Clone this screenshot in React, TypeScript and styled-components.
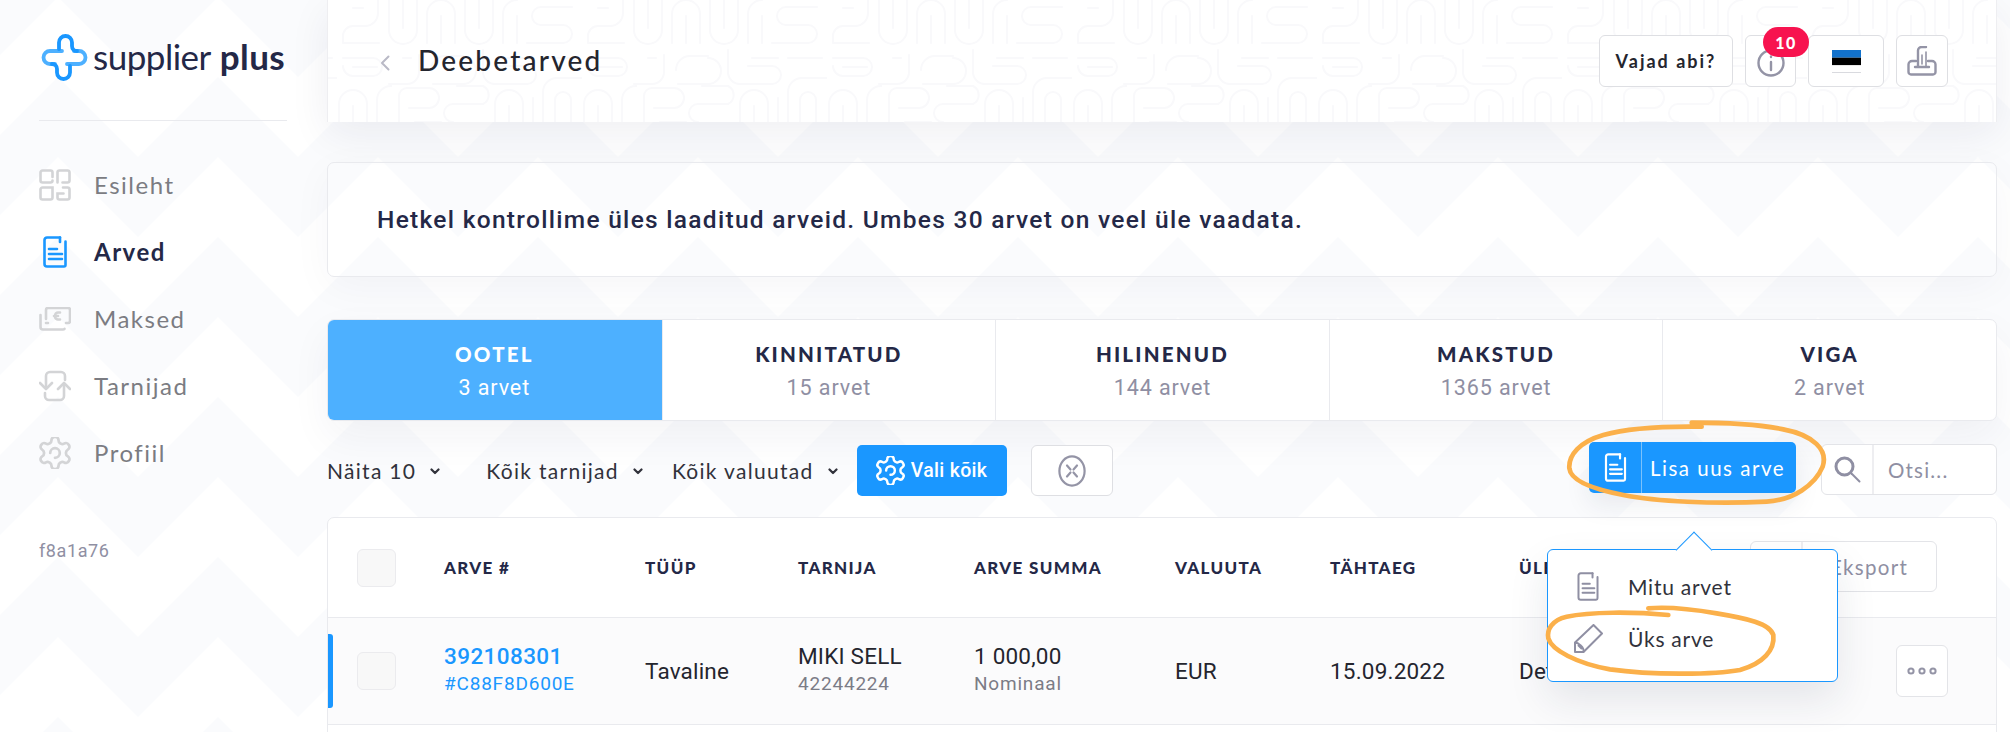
import React from "react";
import styled, { createGlobalStyle } from "styled-components";

const chevronSvg = `<svg xmlns='http://www.w3.org/2000/svg' width='160' height='160'><polygon fill='#fafbfd' points='0,80 80,0 160,80 160,160 80,80 0,160'/></svg>`;
const mazeSvg = `<svg xmlns='http://www.w3.org/2000/svg' width='245' height='122' fill='none' stroke='#f9f9fb' stroke-width='2' stroke-linecap='round'>
<path d='M6 42V36a10 10 0 0 1 10-10H28a13 13 0 0 0 13-13V0M6 43H42M16 8H26'/>
<path d='M52 0V30a14 14 0 0 0 28 0V0M66 0V28'/>
<path d='M90 43V14a14 14 0 0 1 28 0V43M104 16V43'/>
<path d='M128 0V30a14 14 0 0 0 28 0V0M142 0V28'/>
<path d='M166 43V14a14 14 0 0 1 14-14M180 16V43'/>
<path d='M190 43H226a9 9 0 0 0 0-18H204a9 9 0 0 1 0-18H235'/>
<path d='M6 58H36a9 9 0 0 1 0 18H16a10 10 0 0 1-10-10M16 67H40'/>
<path d='M52 84H70a12 12 0 0 0 12-12V55M66 58H74'/>
<path d='M94 70a14 14 0 0 1 14-14H126M96 84H126a12 12 0 0 0 0-26'/>
<path d='M146 50V72a12 12 0 0 0 12 12H190a9 9 0 0 0 0-18H166M170 58H196'/>
<path d='M206 122V92a14 14 0 0 1 14-14H245M206 58H240'/>
<path d='M2 122V104a14 14 0 0 1 28 0V122M16 106V122'/>
<path d='M40 122V100a14 14 0 0 1 14-14V84M62 122V96a8 8 0 0 1 8-8H92a10 10 0 0 1 0 20H72M78 122H104'/>
<path d='M116 122a9 9 0 0 1 0-18H146a10 10 0 0 0 0-18H120'/>
<path d='M158 122V104a14 14 0 0 1 28 0V122M172 106V122'/>
<path d='M196 122V98M218 122V100a8 8 0 0 1 16 0V122'/>
</svg>`;
const uri = (s: string) => `url("data:image/svg+xml,${encodeURIComponent(s.replace(/\n/g, ""))}")`;

const Global = createGlobalStyle`
  html, body { margin: 0; padding: 0; background: #fff; }
  * { box-sizing: border-box; }
`;

const Page = styled.div`
  position: relative;
  width: 2010px;
  height: 732px;
  overflow: hidden;
  display: flex;
  background-color: #fff;
  background-image: ${uri(chevronSvg)};
  background-position: -22px 77px;
  color: #242847;
  font-family: Lato, "Liberation Sans", sans-serif;
`;

const Sidebar = styled.aside`
  flex: none;
  width: 327px;
  padding-left: 39px;
`;

const LogoRow = styled.div`
  width: 248px;
  height: 121px;
  padding: 34px 0 0 2px;
  border-bottom: 1px solid #e9eaee;
  display: flex;
  align-items: flex-start;
  gap: 5px;
`;

const LogoText = styled.div`
  font-size: 35px;
  line-height: 44px;
  letter-spacing: -0.5px;
  color: #242847;
  white-space: nowrap;
  b { font-weight: 700; margin-left: 9px; letter-spacing: 0.4px; }
`;

const Nav = styled.nav`
  padding-top: 30px;
`;

const NavItem = styled.div<{ $active?: boolean }>`
  height: 67px;
  display: flex;
  align-items: center;
  gap: 23px;
  font-size: 24px;
  letter-spacing: 1.5px;
  font-weight: ${(p) => (p.$active ? 700 : 400)};
  color: ${(p) => (p.$active ? "#242847" : "#7b7c82")};
  svg { flex: none; }
`;

const NavDocSlot = styled.span`
  width: 32px;
  display: flex;
  justify-content: center;
`;

const Version = styled.div`
  margin-top: 52px;
  font-family: Roboto, sans-serif;
  font-size: 18px;
  line-height: 25px;
  letter-spacing: 0.6px;
  color: #8f8fa3;
`;

const Main = styled.main`
  flex: none;
  width: 1670px;
`;

const Header = styled.header`
  height: 122px;
  display: flex;
  align-items: center;
  padding: 0 48px 0 52px;
  background-color: #fff;
  background-image: ${uri(mazeSvg)};
  background-position: 9px 0;
  border-left: 1px solid #eeeef1;
  border-right: 1px solid #eeeef1;
  box-shadow: 0 12px 40px rgba(30, 35, 70, 0.07);
`;

const BackIcon = styled.svg`
  margin: 3px 28px 0 0;
`;

const Title = styled.h1`
  margin: 0 0 2px;
  flex: 1;
  font-size: 28px;
  font-weight: 500;
  letter-spacing: 2.2px;
  color: #24252e;
`;

const HeadBtn = styled.div<{ $w: number }>`
  position: relative;
  flex: none;
  width: ${(p) => p.$w}px;
  height: 52px;
  margin-left: 12px;
  display: flex;
  align-items: center;
  justify-content: center;
  background: #fff;
  border: 1px solid #dedfe3;
  border-radius: 6px;
  font-size: 18px;
  font-weight: 700;
  letter-spacing: 2px;
  color: #24252e;
`;

const Badge = styled.span`
  position: absolute;
  left: 17px;
  top: -9px;
  width: 46px;
  height: 30px;
  border-radius: 15px;
  background: #f7134f;
  color: #fff;
  font-size: 16px;
  font-weight: 900;
  letter-spacing: 1.5px;
  display: flex;
  align-items: center;
  justify-content: center;
  z-index: 1;
`;

const Alert = styled.section`
  margin-top: 40px;
  height: 115px;
  display: flex;
  align-items: center;
  padding-left: 49px;
  border: 1px solid #e9eaee;
  border-radius: 7px;
  box-shadow: 0 10px 40px rgba(30, 35, 70, 0.04);
  font-family: Roboto, sans-serif;
  font-size: 24.5px;
  font-weight: 500;
  letter-spacing: 1.29px;
  color: #242847;
`;

const Tabs = styled.section`
  margin-top: 42px;
  height: 102px;
  display: grid;
  grid-template-columns: repeat(5, 1fr);
  background: #fff;
  border: 1px solid #e9eaee;
  border-radius: 7px;
  box-shadow: 0 16px 40px rgba(30, 35, 70, 0.05);
  overflow: hidden;
`;

const Tab = styled.div<{ $active?: boolean }>`
  display: flex;
  flex-direction: column;
  align-items: center;
  padding-top: ${(p) => (p.$active ? 21 : 20)}px;
  margin: ${(p) => (p.$active ? "-1px 0 -1px -1px" : "0")};
  background: ${(p) => (p.$active ? "#4db0ff" : "transparent")};
  & + & { border-left: 1px solid #e9eaee; }
  strong {
    font-size: 20.5px;
    line-height: 28px;
    font-weight: 900;
    letter-spacing: 2.2px;
    color: ${(p) => (p.$active ? "#fff" : "#242847")};
  }
  span {
    margin-top: 6px;
    font-family: Roboto, sans-serif;
    font-size: 21.5px;
    line-height: 28px;
    letter-spacing: 0.9px;
    color: ${(p) => (p.$active ? "#fff" : "#8f8fa3")};
  }
`;

const Toolbar = styled.section`
  margin-top: 24px;
  height: 51px;
  display: flex;
  align-items: center;
`;

const Filter = styled.div<{ $gap: number }>`
  display: flex;
  align-items: center;
  margin-right: ${(p) => p.$gap}px;
  font-size: 21px;
  letter-spacing: 1.3px;
  color: #31323b;
  svg { margin-left: 14px; margin-top: 2px; }
`;

const BlueBtn = styled.div`
  width: 150px;
  height: 51px;
  display: flex;
  align-items: center;
  justify-content: center;
  gap: 6px;
  background: #1a97ff;
  border-radius: 5px;
  color: #fff;
  font-family: Roboto, sans-serif;
  font-size: 19.5px;
  font-weight: 500;
  letter-spacing: 0.3px;
`;

const GhostBtn = styled.div`
  width: 82px;
  height: 51px;
  margin-left: 24px;
  display: flex;
  align-items: center;
  justify-content: center;
  background: #fff;
  border: 1px solid #dedfe3;
  border-radius: 6px;
`;

const AddWrap = styled.div`
  position: relative;
  margin-left: auto;
  margin-top: -6px;
`;

const AddBtn = styled.div`
  width: 207px;
  height: 51px;
  display: flex;
  align-items: center;
  background: #1a97ff;
  border-radius: 5px;
  box-shadow: 0 12px 26px rgba(30, 35, 70, 0.08);
  color: #fff;
  font-size: 20.5px;
  letter-spacing: 1.5px;
  span { margin-left: 8px; }
`;

const AddIcon = styled.div`
  width: 53px;
  height: 51px;
  display: flex;
  align-items: center;
  justify-content: center;
  border-right: 1px solid #7cc2fb;
`;

const Search = styled.div`
  width: 176px;
  height: 51px;
  margin-left: 25px;
  margin-top: -2px;
  display: flex;
  align-items: center;
  background: #fff;
  border: 1px solid #e3e4e8;
  border-radius: 6px;
  color: #8f8fa3;
  font-size: 20.5px;
  letter-spacing: 1.2px;
  span { margin-left: 14px; }
`;

const SearchIcon = styled.div`
  width: 52px;
  height: 49px;
  display: flex;
  align-items: center;
  justify-content: center;
  border-right: 2px solid #eeeef1;
`;

const Menu = styled.div`
  position: absolute;
  left: -42px;
  top: 107px;
  width: 291px;
  height: 133px;
  padding-top: 10px;
  background: #fff;
  border: 1px solid #1a97ff;
  border-radius: 6px;
  box-shadow: 0 18px 40px rgba(30, 35, 70, 0.1);
  z-index: 3;
  &::before {
    content: "";
    position: absolute;
    left: 133px;
    top: -13px;
    width: 25px;
    height: 25px;
    background: #fff;
    border-left: 1px solid #1a97ff;
    border-top: 1px solid #1a97ff;
    transform: rotate(45deg);
  }
`;

const MenuItem = styled.div`
  position: relative;
  height: 52px;
  display: flex;
  align-items: center;
  font-size: 21px;
  letter-spacing: 0.75px;
  color: #31323b;
`;

const MenuIcon = styled.div`
  width: 80px;
  display: flex;
  justify-content: center;
`;

const Table = styled.section`
  margin-top: 21px;
  height: 240px;
  background: #fff;
  border: 1px solid #e9eaee;
  border-radius: 7px;
`;

const Row = styled.div<{ $h: number; $tint?: boolean }>`
  position: relative;
  height: ${(p) => p.$h}px;
  display: grid;
  grid-template-columns: 87px 201px 153px 176px 201px 155px 189px 1fr;
  align-items: center;
  padding-left: 29px;
  background: ${(p) => (p.$tint ? "#fbfbfc" : "transparent")};
  border-bottom: 1px solid #e9eaee;
`;

const Check = styled.div`
  width: 39px;
  height: 38px;
  background: #f8f8f8;
  border: 1px solid #ebebee;
  border-radius: 6px;
`;

const Th = styled.div`
  margin-bottom: 1px;
  font-size: 17px;
  font-weight: 900;
  letter-spacing: 1.35px;
  color: #242847;
  white-space: nowrap;
`;

const Marker = styled.div`
  position: absolute;
  left: 0;
  top: 16px;
  width: 5px;
  height: 74px;
  background: #1a97ff;
  border-radius: 0 3px 3px 0;
`;

const Cell = styled.div`
  font-family: Roboto, sans-serif;
  font-size: 22.5px;
  letter-spacing: 0.2px;
  color: #24252e;
  white-space: nowrap;
`;

const Stack = styled.div`
  margin-top: -2px;
  display: flex;
  flex-direction: column;
  font-family: Roboto, sans-serif;
  white-space: nowrap;
`;

const Primary = styled.span<{ $link?: boolean }>`
  font-size: 22.5px;
  line-height: 28px;
  font-weight: ${(p) => (p.$link ? 500 : 400)};
  letter-spacing: ${(p) => (p.$link ? 0.4 : 0.2)}px;
  color: ${(p) => (p.$link ? "#1a97ff" : "#24252e")};
`;

const Secondary = styled.span<{ $link?: boolean }>`
  font-size: 19px;
  line-height: 28px;
  letter-spacing: 0.8px;
  color: ${(p) => (p.$link ? "#1a97ff" : "#7b7c86")};
`;

const Export = styled.div`
  position: absolute;
  left: 1422px;
  top: 23px;
  width: 187px;
  height: 51px;
  display: flex;
  align-items: center;
  background: #fff;
  border: 1px solid #e3e4e8;
  border-radius: 6px;
  color: #8f8fa3;
  font-size: 20.5px;
  letter-spacing: 1.3px;
  span { margin-left: 27px; }
`;

const ExportIcon = styled.div`
  width: 52px;
  height: 49px;
  border-right: 2px solid #eeeef1;
`;

const MoreBtn = styled.div`
  position: absolute;
  left: 1568px;
  top: 27px;
  width: 52px;
  height: 52px;
  display: flex;
  align-items: center;
  justify-content: center;
  background: #fff;
  border: 1px solid #e3e4e8;
  border-radius: 6px;
`;

const Scribbles = styled.svg`
  position: absolute;
  left: 1500px;
  top: 400px;
  z-index: 5;
  pointer-events: none;
`;

const G = "#d3d4d6";

const Logo = () => (
  <svg width="47" height="47" viewBox="0 0 47 47" fill="none" strokeWidth="3.8" strokeLinecap="round">
    <path stroke="#4db0ff" d="M21 17H9a6.500 6.500 0 0 0 0 13h5M26 30h12a6.500 6.500 0 0 0 0-13h-5" />
    <path stroke="#1a97ff" d="M18 15V8.500a6.500 6.500 0 0 1 13 0V12c0 3 2 5 5 5M29 32v6.500a6.500 6.500 0 0 1-13 0V35c0-3-2-5-5-5" />
  </svg>
);

const HomeIcon = () => (
  <svg width="32" height="32" viewBox="0 0 32 32" fill="none" stroke={G} strokeWidth="2.6" strokeLinecap="round">
    <path d="M13.500 8V3.500a2 2 0 0 0-2-2H3.500a2 2 0 0 0-2 2v8a2 2 0 0 0 2 2h8a2 2 0 0 0 2-2" />
    <path d="M18.500 13.500V3.500a2 2 0 0 1 2-2h8a2 2 0 0 1 2 2v8a2 2 0 0 1-2 2h-5" />
    <path d="M13.500 24v4.500a2 2 0 0 1-2 2h-8a2 2 0 0 1-2-2v-8a2 2 0 0 1 2-2h10v6" />
    <path d="M24 18.500h4.500a2 2 0 0 1 2 2v8a2 2 0 0 1-2 2h-8a2 2 0 0 1-2-2v-4h6" />
  </svg>
);

const DocIcon = ({ c, w = 24, h = 32, sw = 2.6 }: { c: string; w?: number; h?: number; sw?: number }) => (
  <svg width={w} height={h} viewBox="0 0 24 32" fill="none" stroke={c} strokeWidth={sw} strokeLinecap="round" strokeLinejoin="round">
    <path d="M17 1.500H4a2.500 2.500 0 0 0-2.500 2.500v24A2.500 2.500 0 0 0 4 30.500h17a1.500 1.500 0 0 0 1.500-1.500V5.500" />
    <path d="M6 13h8M6 18h13M6 23h13" />
    <path d="M17 1.500V6" />
  </svg>
);

const MoneyIcon = () => (
  <svg width="32" height="24" viewBox="0 0 32 24" fill="none" stroke={G} strokeWidth="2.6" strokeLinecap="round" strokeLinejoin="round">
    <path d="M7 12V3a2 2 0 0 1 2-2h20a2 2 0 0 1 2 2v11a2 2 0 0 1-2 2h-2M7 16h2" />
    <path d="M1.500 8v12a2.500 2.500 0 0 0 2.500 2.500h20a2 2 0 0 0 1.500-.7" />
    <path d="M21 5.500h-2a3 3 0 0 0-3 3v1a3 3 0 0 0 3 3h2M15 9h4" />
  </svg>
);

const SwapIcon = () => (
  <svg width="32" height="32" viewBox="0 0 32 32" fill="none" stroke={G} strokeWidth="2.6" strokeLinecap="round" strokeLinejoin="round">
    <path d="M7 18V6a4 4 0 0 1 4-4h11a4 4 0 0 1 4 4v4" />
    <path d="M1 13l6 6 6-6" />
    <path d="M25 14v12a4 4 0 0 1-4 4H10a4 4 0 0 1-4-4v-3" />
    <path d="M19 19l6-6 6 6" />
  </svg>
);

const GEAR =
  "M12.22 2h-.44a2 2 0 0 0-2 2v.18a2 2 0 0 1-1 1.73l-.43.25a2 2 0 0 1-2 0l-.15-.08a2 2 0 0 0-2.73.73l-.22.38a2 2 0 0 0 .73 2.73l.15.1a2 2 0 0 1 1 1.72v.51a2 2 0 0 1-1 1.74l-.15.09a2 2 0 0 0-.73 2.73l.22.38a2 2 0 0 0 2.73.73l.15-.08a2 2 0 0 1 2 0l.43.25a2 2 0 0 1 1 1.73V20a2 2 0 0 0 2 2h.44a2 2 0 0 0 2-2v-.18a2 2 0 0 1 1-1.73l.43-.25a2 2 0 0 1 2 0l.15.08a2 2 0 0 0 2.73-.73l.22-.39a2 2 0 0 0-.73-2.73l-.15-.08a2 2 0 0 1-1-1.74v-.5a2 2 0 0 1 1-1.74l.15-.09a2 2 0 0 0 .73-2.73l-.22-.38a2 2 0 0 0-2.73-.73l-.15.08a2 2 0 0 1-2 0l-.43-.25a2 2 0 0 1-1-1.73V4a2 2 0 0 0-2-2z";

const GearIcon = ({ c, s }: { c: string; s: number }) => (
  <svg width={s} height={s} viewBox="2 2 20 20" fill="none" stroke={c} strokeWidth="1.7" strokeLinecap="round" strokeLinejoin="round">
    <path d={GEAR} />
    <path d="M9 12a3 3 0 1 1 3 3" />
  </svg>
);

const Caret = () => (
  <svg width="10" height="7" viewBox="0 0 10 7" fill="none" stroke="#31323b" strokeWidth="2.2" strokeLinecap="round" strokeLinejoin="round">
    <path d="M1.500 1.500 5 5l3.500-3.500" />
  </svg>
);

const tabs = [
  ["OOTEL", "3 arvet"],
  ["KINNITATUD", "15 arvet"],
  ["HILINENUD", "144 arvet"],
  ["MAKSTUD", "1365 arvet"],
  ["VIGA", "2 arvet"],
];

const heads = ["ARVE #", "TÜÜP", "TARNIJA", "ARVE SUMMA", "VALUUTA", "TÄHTAEG", "ÜLE"];

export default function App() {
  return (
    <Page>
      <Global />
      <Sidebar>
        <LogoRow>
          <Logo />
          <LogoText>
            supplier<b>plus</b>
          </LogoText>
        </LogoRow>
        <Nav>
          <NavItem><HomeIcon />Esileht</NavItem>
          <NavItem $active>
            <NavDocSlot><DocIcon c="#1a97ff" /></NavDocSlot>
            Arved
          </NavItem>
          <NavItem><MoneyIcon />Maksed</NavItem>
          <NavItem><SwapIcon />Tarnijad</NavItem>
          <NavItem><GearIcon c={G} s={32} />Profiil</NavItem>
        </Nav>
        <Version>f8a1a76</Version>
      </Sidebar>

      <Main>
        <Header>
          <BackIcon width="10" height="16" viewBox="0 0 10 16" fill="none" stroke="#b9b9c6" strokeWidth="2" strokeLinecap="round" strokeLinejoin="round">
            <path d="M8.500 1.500 2 8l6.500 6.500" />
          </BackIcon>
          <Title>Deebetarved</Title>
          <HeadBtn $w={134}>Vajad abi?</HeadBtn>
          <HeadBtn $w={51}>
            <svg width="28" height="28" viewBox="0 0 28 28" fill="none" stroke="#9494a6" strokeWidth="2.4" strokeLinecap="round" style={{ marginTop: 3 }}>
              <circle cx="14" cy="14" r="12.500" />
              <path d="M14 13v8" />
              <path d="M14 7.500v.5" />
            </svg>
            <Badge>10</Badge>
          </HeadBtn>
          <HeadBtn $w={76}>
            <svg width="29" height="23" viewBox="0 0 29 23">
              <rect width="29" height="7.7" fill="#1272cc" />
              <rect y="7.7" width="29" height="7.6" fill="#000" />
              <rect y="15.3" width="29" height="7.7" fill="#fff" />
              <rect y="22.3" width="29" height="0.7" fill="#c9cad2" />
            </svg>
          </HeadBtn>
          <HeadBtn $w={52}>
            <svg width="30" height="30" viewBox="0 0 30 30" fill="none" stroke="#9494a6" strokeWidth="2.4" strokeLinecap="round" strokeLinejoin="round">
              <path d="M9 15H5a3.500 3.500 0 0 0-3.500 3.500V26A2.500 2.500 0 0 0 4 28.500h22a2.500 2.500 0 0 0 2.500-2.500v-7.500A3.500 3.500 0 0 0 25 15h-4" />
              <path d="M8 21h14" />
              <path d="M11 20V4.500A3.500 3.500 0 0 1 14.500 1H19" />
              <path d="M19 6v14M15 9v9" strokeWidth="1.6" />
            </svg>
          </HeadBtn>
        </Header>

        <Alert>Hetkel kontrollime üles laaditud arveid. Umbes 30 arvet on veel üle vaadata.</Alert>

        <Tabs>
          {tabs.map(([a, b], i) => (
            <Tab key={a} $active={i === 0}>
              <strong>{a}</strong>
              <span>{b}</span>
            </Tab>
          ))}
        </Tabs>

        <Toolbar>
          <Filter $gap={46}>Näita 10<Caret /></Filter>
          <Filter $gap={29}>Kõik tarnijad<Caret /></Filter>
          <Filter $gap={19}>Kõik valuutad<Caret /></Filter>
          <BlueBtn>
            <GearIcon c="#fff" s={29} />
            Vali kõik
          </BlueBtn>
          <GhostBtn>
            <svg width="28" height="32" viewBox="0 0 28 32" fill="none" stroke="#9494a6" strokeWidth="2.2" strokeLinecap="round">
              <ellipse cx="14" cy="16" rx="12.600" ry="14.600" />
              <path d="M9 10.500l3.500 4M19 10.500l-3.500 4M9 21.500l3.500-4M19 21.500l-3.500-4" />
            </svg>
          </GhostBtn>
          <AddWrap>
            <AddBtn>
              <AddIcon><DocIcon c="#fff" w={23} h={29} sw={2.4} /></AddIcon>
              <span>Lisa uus arve</span>
            </AddBtn>
            <Menu>
              <MenuItem>
                <MenuIcon><DocIcon c="#8f8fa3" w={22} h={29} sw={2.2} /></MenuIcon>
                Mitu arvet
              </MenuItem>
              <MenuItem>
                <MenuIcon>
                  <svg width="29" height="29" viewBox="0 0 29 29" fill="none" stroke="#8f8fa3" strokeWidth="2" strokeLinejoin="round">
                    <path d="M1 28V18.500L19.500 1 28 9.500 9.500 28H1Z" />
                    <path d="M1 18.500c3 0 9.500 5 8.500 9.500M4 21l4 4" />
                  </svg>
                </MenuIcon>
                Üks arve
              </MenuItem>
            </Menu>
          </AddWrap>
          <Search>
            <SearchIcon>
              <svg width="27" height="27" viewBox="0 0 27 27" fill="none" stroke="#8f8fa3" strokeLinecap="round">
                <circle cx="10.500" cy="10.500" r="8.500" strokeWidth="3" />
                <path d="M17.500 17.500 25.500 25.500" strokeWidth="2" />
              </svg>
            </SearchIcon>
            <span>Otsi...</span>
          </Search>
        </Toolbar>

        <Table>
          <Row $h={100}>
            <Check />
            {heads.map((h) => <Th key={h}>{h}</Th>)}
            <Export>
              <ExportIcon />
              <span>Eksport</span>
            </Export>
          </Row>
          <Row $h={107} $tint>
            <Marker />
            <Check />
            <Stack>
              <Primary $link>392108301</Primary>
              <Secondary $link>#C88F8D600E</Secondary>
            </Stack>
            <Cell>Tavaline</Cell>
            <Stack>
              <Primary>MIKI SELL</Primary>
              <Secondary>42244224</Secondary>
            </Stack>
            <Stack>
              <Primary>1 000,00</Primary>
              <Secondary>Nominaal</Secondary>
            </Stack>
            <Cell>EUR</Cell>
            <Cell>15.09.2022</Cell>
            <Cell>Detsember</Cell>
            <MoreBtn>
              <svg width="30" height="8" viewBox="0 0 30 8" fill="none" stroke="#9494a6" strokeWidth="2">
                <circle cx="4" cy="4" r="2.600" />
                <circle cx="15" cy="4" r="2.600" />
                <circle cx="26" cy="4" r="2.600" />
              </svg>
            </MoreBtn>
          </Row>
        </Table>
      </Main>

      <Scribbles width="510" height="332" viewBox="0 0 1530 996" fill="none" stroke="#fbb04a" strokeWidth="14" strokeLinecap="round">
        <path d="M605 80C480 78 380 85 310 105C240 125 205 165 208 205C212 245 290 270 370 285C470 305 640 312 800 305C880 300 945 255 968 200C985 150 940 105 850 88C760 70 660 68 575 68" />
        <path d="M505 645C400 635 270 635 200 650C155 660 140 690 145 715C155 750 230 790 330 808C450 825 640 825 720 810C790 790 825 750 820 705C810 670 740 655 650 640C580 628 500 620 445 625" />
      </Scribbles>
    </Page>
  );
}
